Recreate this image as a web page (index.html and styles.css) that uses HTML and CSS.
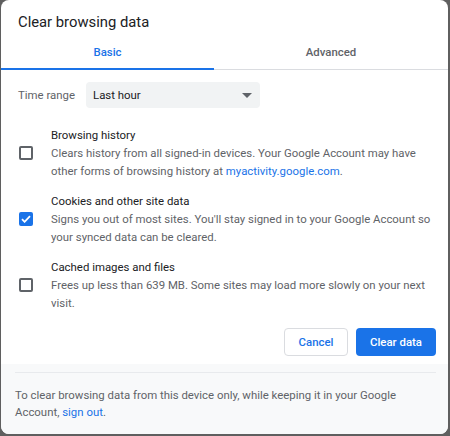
FILE: index.html
```html
<!DOCTYPE html>
<html>
<head>
<meta charset="utf-8">
<link rel="stylesheet" href="styles.css">
</head>
<body>
<div class="dialog">
  <div class="main">
    <h1 class="title">Clear browsing data</h1>
    <div class="tabs">
      <div class="tab active">Basic</div>
      <div class="tab">Advanced</div>
    </div>
    <div class="range-row">
      <span class="range-label">Time range</span>
      <div class="select">
        <span>Last hour</span>
        <svg class="arrow" width="10" height="5" viewBox="0 0 10 5"><path d="M0 0h10L5 5z" fill="#5f6368"/></svg>
      </div>
    </div>
    <div class="items">
      <div class="item">
        <span class="checkbox"></span>
        <div class="item-text">
          <div class="item-title">Browsing history</div>
          <div class="item-desc">Clears history from all signed-in devices. Your Google Account may have other forms of browsing history at <a class="link">myactivity.google.com</a>.</div>
        </div>
      </div>
      <div class="item">
        <span class="checkbox checked"><svg width="10" height="8" viewBox="0 0 10 8"><path d="M1 4.2l2.6 2.6L9 1.2" fill="none" stroke="#fff" stroke-width="1.8"/></svg></span>
        <div class="item-text">
          <div class="item-title">Cookies and other site data</div>
          <div class="item-desc">Signs you out of most sites. You'll stay signed in to your Google Account so your synced data can be cleared.</div>
        </div>
      </div>
      <div class="item">
        <span class="checkbox"></span>
        <div class="item-text">
          <div class="item-title">Cached images and files</div>
          <div class="item-desc">Frees up less than 639 MB. Some sites may load more slowly on your next visit.</div>
        </div>
      </div>
    </div>
    <div class="actions">
      <button class="btn btn-cancel">Cancel</button>
      <button class="btn btn-primary">Clear data</button>
    </div>
  </div>
  <div class="footer">
    <div class="footer-text">To clear browsing data from this device only, while keeping it in your Google Account, <a class="link">sign out</a>.</div>
  </div>
</div>
</body>
</html>
```

FILE: styles.css
```css
* { box-sizing: border-box; }
html, body {
  margin: 0;
  padding: 0;
  background: #5f5f5f;
  width: 450px;
  height: 436px;
  overflow: hidden;
}
body {
  padding: 0 2px 2px 1px;
  font-family: Roboto, "Noto Sans", sans-serif;
  font-size: 11.4px;
  color: #5f6368;
}
.dialog {
  width: 447px;
  height: 434px;
  background: #fff;
  border-radius: 8px;
  overflow: hidden;
  display: flex;
  flex-direction: column;
}
.main {
  padding: 12px 0 0;
}
.title {
  margin: 0;
  padding: 0 17px;
  font-size: 14.8px;
  font-weight: 400;
  line-height: 20px;
  color: #202124;
}
.tabs {
  display: flex;
  margin-top: 4px;
  height: 34px;
  box-shadow: inset 0 -1px 0 #dadce0;
}
.tab {
  flex: 1;
  text-align: center;
  line-height: 32px;
  font-weight: 500;
  color: #5f6368;
  border-bottom: 2px solid transparent;
}
.tab.active {
  flex: 0 0 213px;
  color: #1a73e8;
  border-bottom-color: #1a73e8;
}
.range-row {
  display: flex;
  align-items: center;
  margin-top: 12px;
  padding-left: 17px;
}
.range-label {
  width: 68px;
}
.select {
  width: 174px;
  height: 26px;
  background: #f1f3f4;
  border-radius: 4px;
  display: flex;
  align-items: center;
  justify-content: space-between;
  padding: 0 8px 0 7px;
  color: #202124;
}
.items {
  display: flex;
  flex-direction: column;
  gap: 12px;
  margin-top: 18px;
  padding: 0 14px 0 18px;
}
.item {
  display: flex;
  align-items: center;
  gap: 18px;
}
.checkbox {
  flex: none;
  width: 14px;
  height: 14px;
  border: 2px solid #5f6368;
  border-radius: 2px;
  display: flex;
  align-items: center;
  justify-content: center;
}
.checkbox.checked {
  background: #1a73e8;
  border-color: #1a73e8;
}
.item-title {
  line-height: 18px;
  color: #202124;
}
.item-desc {
  line-height: 18px;
}
.link {
  color: #1a73e8;
  text-decoration: none;
}
.actions {
  display: flex;
  justify-content: flex-end;
  gap: 8px;
  margin-top: 16px;
  padding-right: 12px;
}
.btn {
  height: 28px;
  border-radius: 4px;
  font-family: inherit;
  font-size: 11.4px;
  font-weight: 500;
  padding: 0;
}
.btn-cancel {
  width: 64px;
  background: #fff;
  color: #1a73e8;
  border: 1px solid #dadce0;
}
.btn-primary {
  width: 80px;
  background: #1a73e8;
  color: #fff;
  border: none;
}
.footer {
  flex: 1;
  margin-top: 8px;
  background: #f8f9fa;
  padding: 8px 12px 0 14px;
}
.footer-text {
  border-top: 1px solid #e8eaed;
  padding-top: 14px;
  line-height: 17px;
}
```
